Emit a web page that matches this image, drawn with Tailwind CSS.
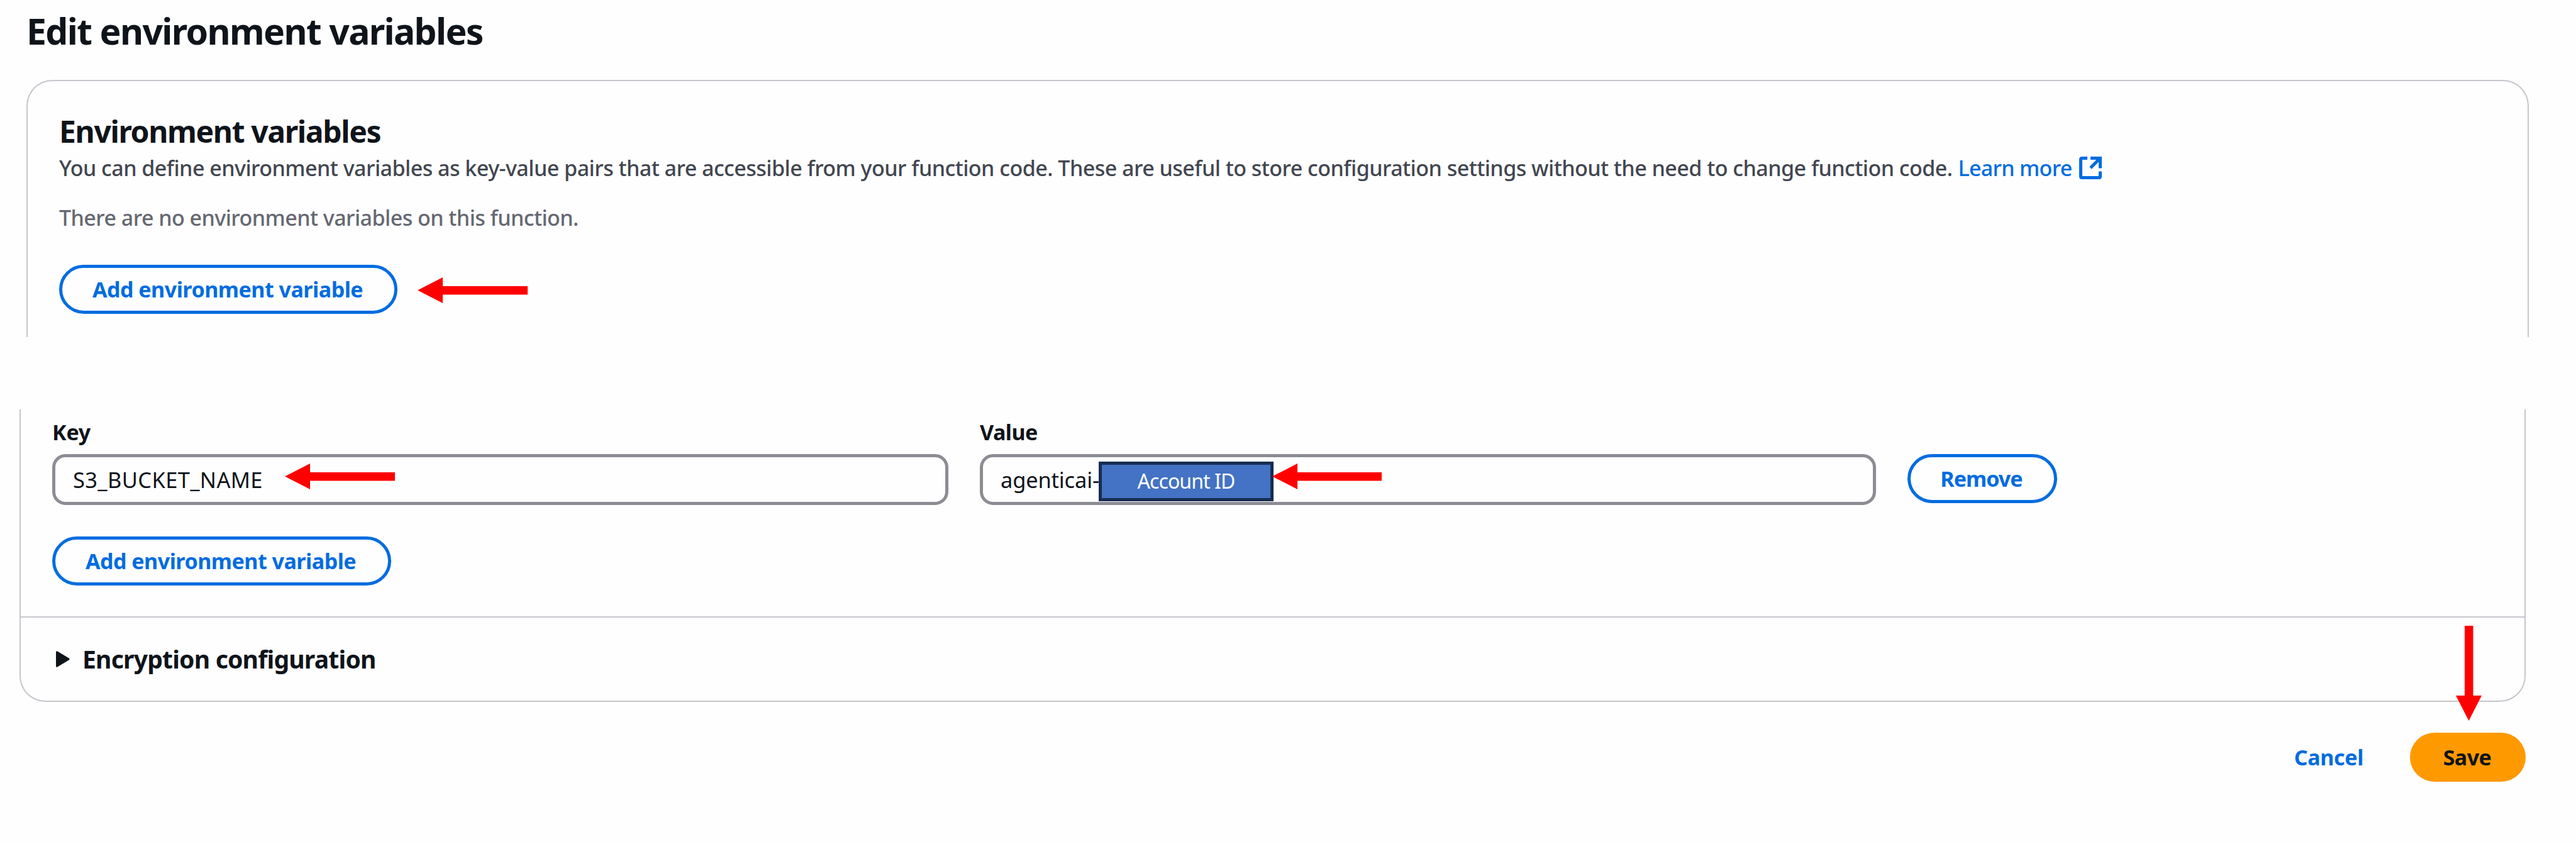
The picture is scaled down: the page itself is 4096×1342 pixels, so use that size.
<!DOCTYPE html>
<html lang="en">
<head>
<meta charset="utf-8">
<title>Edit environment variables</title>
<script src="https://cdn.jsdelivr.net/npm/@tailwindcss/browser@4"></script>
</head>
<body class="relative h-[1342px] w-[4096px] overflow-hidden bg-[#fefefe] font-['Noto_Sans',sans-serif] text-[34px] text-[#0f141a]">

  <h1 class="mt-[16px] ml-[42px] h-[67px] text-[57px] leading-[67px] font-bold tracking-[-1.6px] whitespace-nowrap">Edit environment variables</h1>

  <!-- Environment variables, empty state -->
  <section class="mt-[44px] ml-[42px] h-[409px] w-[3979px] rounded-t-[41px] border-2 border-b-0 border-[#c6c6cd] pt-[52px] pl-[50px]">
    <h2 class="h-[56px] text-[48px] leading-[56px] font-bold tracking-[-1.35px] whitespace-nowrap">Environment variables</h2>
    <div class="mt-[3px] flex h-[54px] items-center leading-[54px] font-medium whitespace-nowrap">
      <p class="tracking-[-0.515px] text-[#424650]">You can define environment variables as key-value pairs that are accessible from your function code. These are useful to store configuration settings without the need to change function code.</p>
      <a class="ml-[9px] flex items-center text-[#006ce0]">
        <span class="tracking-[-0.7px]">Learn more</span>
        <svg class="ml-[12px] h-[36px] w-[36px]" viewBox="0 0 36 36" fill="none" stroke="currentColor" stroke-width="5">
          <path d="M13 2.5H4.5Q2.5 2.5 2.5 4.5V31.5Q2.5 33.5 4.5 33.5H31.5Q33.5 33.5 33.5 31.5V23.5"/>
          <path d="M18 2.5H33.5V18.5M32.5 3.5L18 18"/>
        </svg>
      </a>
    </div>
    <p class="mt-[25px] h-[54px] leading-[54px] font-medium tracking-[-0.53px] whitespace-nowrap text-[#656871]">There are no environment variables on this function.</p>
    <button class="mt-[48px] flex h-[78px] w-[538px] items-center justify-center rounded-full border-5 border-[#006ce0] pr-[2px] font-bold tracking-[-0.48px] whitespace-nowrap text-[#006ce0]">Add environment variable</button>
  </section>

  <!-- Key / value editor -->
  <section class="mt-[115px] ml-[31px] flex h-[465px] w-[3985px] flex-col rounded-b-[41px] border-2 border-t-0 border-[#c6c6cd]">
    <div class="h-[329px] pt-[14px] pl-[50px]">
      <div class="flex gap-[50px]">
        <label class="w-[1425px]">
          <span class="block h-[44px] leading-[44px] font-bold tracking-[-0.2px]">Key</span>
          <span class="mt-[13px] flex h-[81px] items-center rounded-[21px] border-5 border-[#8c8c94] pl-[28px] text-[34.4px] tracking-[0.4px]">S3_BUCKET_NAME</span>
        </label>
        <label class="w-[1425px]">
          <span class="block h-[44px] leading-[44px] font-bold tracking-[-0.5px]">Value</span>
          <span class="mt-[13px] flex h-[81px] items-center rounded-[21px] border-5 border-[#8c8c94] pl-[28px] text-[34.4px] tracking-[-0.13px]">agenticai-</span>
        </label>
        <button class="mt-[57px] flex h-[78px] w-[238px] items-center justify-center rounded-full border-5 border-[#006ce0] pr-[3px] font-bold tracking-[-0.93px] text-[#006ce0]">Remove</button>
      </div>
      <button class="mt-[50px] flex h-[78px] w-[539px] items-center justify-center rounded-full border-5 border-[#006ce0] pr-[3px] font-bold tracking-[-0.48px] whitespace-nowrap text-[#006ce0]">Add environment variable</button>
    </div>
    <div class="flex h-[134px] items-center border-t-2 border-[#c6c6cd] pl-[56px]">
      <svg class="h-[26px] w-[22px]" viewBox="0 0 22 26" fill="#0f141a"><path d="M0 2.2Q0 -.8 2.6 .8L20.6 11.4Q22.4 13 20.6 14.6L2.6 25.2Q0 26.8 0 23.8Z"/></svg>
      <span class="ml-[20px] text-[39px] leading-[54px] font-bold tracking-[-0.77px] whitespace-nowrap">Encryption configuration</span>
    </div>
  </section>

  <div class="mt-[49px] mr-[80px] flex h-[78px] items-center justify-end font-bold">
    <a class="mr-[74px] tracking-[-0.35px] text-[#006ce0]">Cancel</a>
    <button class="flex h-[78px] w-[184px] items-center justify-center rounded-full bg-[#ff9900] pr-[2px] tracking-[-0.53px]">Save</button>
  </div>

  <!-- Annotations lying over the form -->
  <div class="absolute top-[734px] left-[1747px] flex h-[63px] w-[278px] items-center justify-center border-5 border-[#172c51] bg-[#4472c4] pb-[2px] text-[32px] tracking-[-0.92px] text-white">Account ID</div>
  <svg class="absolute top-[441px] left-[664px] h-[41px] w-[175px]" viewBox="0 0 175 41" fill="#ff0000"><path d="M0 20.5L40 0V14H175V27.5H40V41Z"/></svg>
  <svg class="absolute top-[737px] left-[453px] h-[41px] w-[175px]" viewBox="0 0 175 41" fill="#ff0000"><path d="M0 20.5L40 0V14H175V27.5H40V41Z"/></svg>
  <svg class="absolute top-[737px] left-[2023px] h-[41px] w-[174px]" viewBox="0 0 174 41" fill="#ff0000"><path d="M0 20.5L40 0V14H174V27.5H40V41Z"/></svg>
  <svg class="absolute top-[995px] left-[3905px] h-[151px] w-[41px]" viewBox="0 0 41 151" fill="#ff0000"><path d="M20.5 151L0 111H14V0H27.5V111H41Z"/></svg>
</body>
</html>
